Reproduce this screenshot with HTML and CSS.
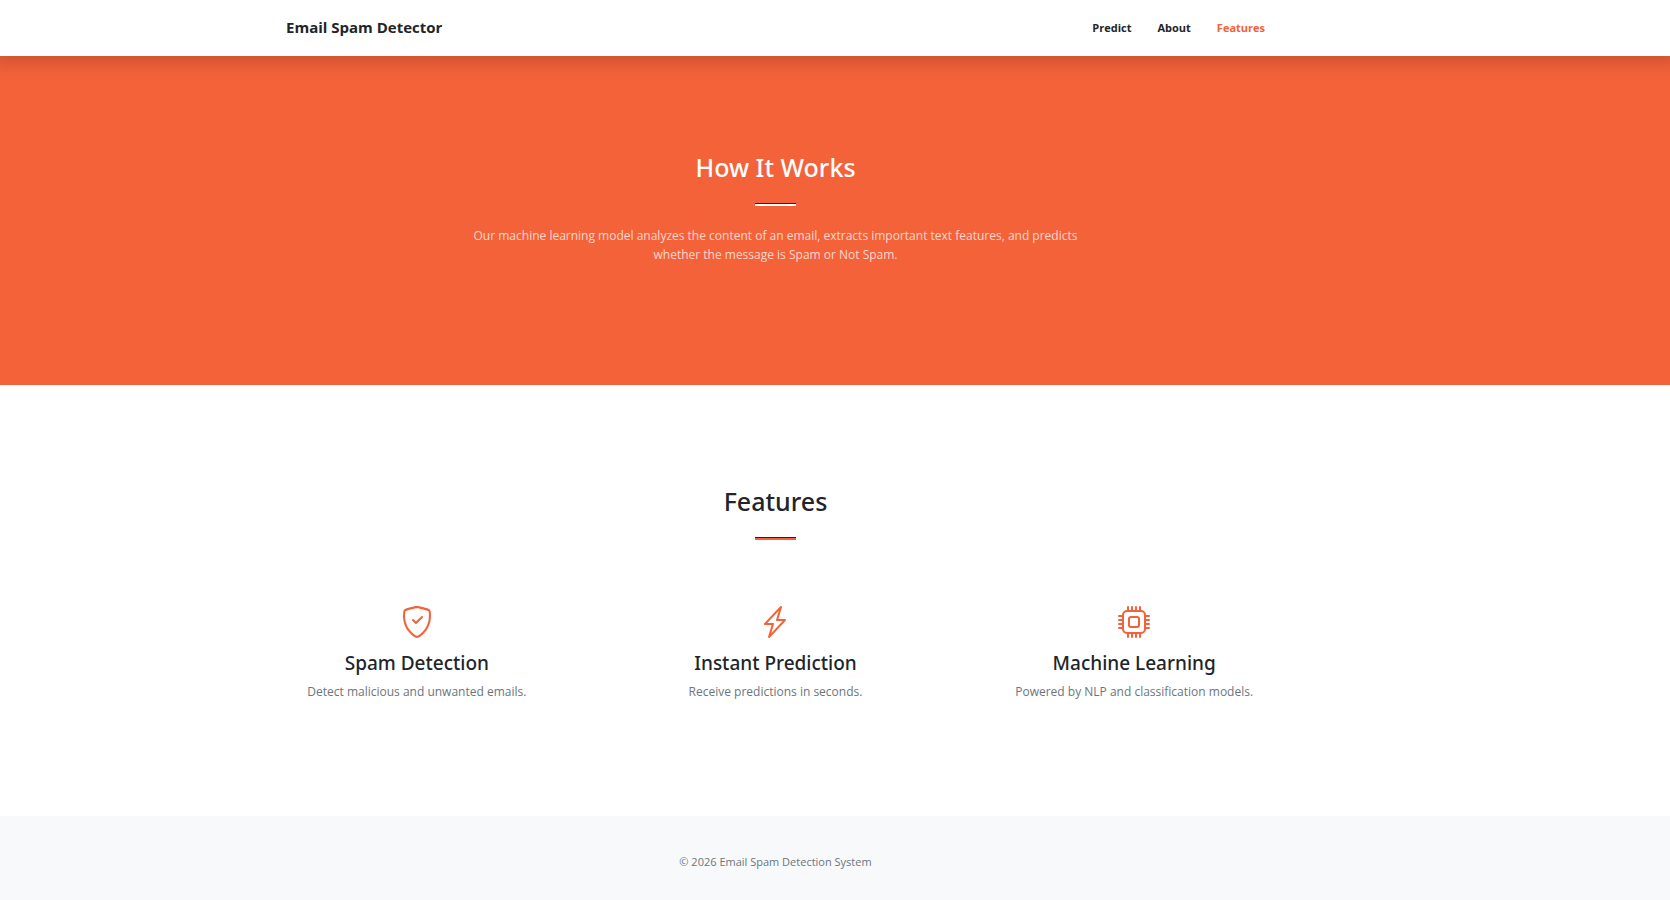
FILE: index.html
```html
<!DOCTYPE html>
<html lang="en">
<head>
  <meta charset="UTF-8" />
  <meta name="viewport" content="width=device-width, initial-scale=1.0"/>
  <title>Email Spam Detector</title>
  <link rel="stylesheet" href="styles.css">
</head>
<body>
  <!-- NAVBAR -->
  <nav class="navbar">
    <div class="container">
      <a class="brand" href="#about">Email Spam Detector</a>
      <div class="nav-links">
        <a href="#predict">Predict</a>
        <a href="#about">About</a>
        <a class="active" href="#features">Features</a>
      </div>
    </div>
  </nav>

  <!-- ABOUT -->
  <section class="about" id="about">
    <div class="container">
      <h2>How It Works</h2>
      <hr class="divider divider-light">
      <p>Our machine learning model analyzes the content of an email, extracts important text features, and predicts whether the message is Spam or Not Spam.</p>
    </div>
  </section>

  <!-- FEATURES -->
  <section class="features" id="features">
    <div class="container">
      <h2>Features</h2>
      <hr class="divider">
      <div class="feature-list">
        <div class="feature">
          <svg class="icon" viewBox="0 0 16 16" aria-hidden="true">
            <path d="M5.338 1.59a61 61 0 0 0-2.837.856.48.48 0 0 0-.328.39c-.554 4.157.726 7.19 2.253 9.188a10.7 10.7 0 0 0 2.287 2.233c.346.244.652.42.893.533q.18.085.293.118a1 1 0 0 0 .101.025 1 1 0 0 0 .1-.025q.114-.034.294-.118c.24-.113.547-.29.893-.533a10.7 10.7 0 0 0 2.287-2.233c1.527-1.997 2.807-5.031 2.253-9.188a.48.48 0 0 0-.328-.39c-.651-.213-1.75-.56-2.837-.855C9.552 1.29 8.531 1.067 8 1.067c-.53 0-1.552.223-2.662.524zM5.072.56C6.157.265 7.31 0 8 0s1.843.265 2.928.56c1.11.3 2.229.655 2.887.87a1.54 1.54 0 0 1 1.044 1.262c.596 4.477-.787 7.795-2.465 9.99a11.8 11.8 0 0 1-2.517 2.453 7 7 0 0 1-1.048.625c-.28.132-.581.24-.829.24s-.548-.108-.829-.24a7 7 0 0 1-1.048-.625 11.8 11.8 0 0 1-2.517-2.453C1.928 10.487.545 7.169 1.141 2.692A1.54 1.54 0 0 1 2.185 1.43 63 63 0 0 1 5.072.56"/>
            <path d="M10.854 5.146a.5.5 0 0 1 0 .708l-3 3a.5.5 0 0 1-.708 0l-1.5-1.5a.5.5 0 1 1 .708-.708L7.5 7.793l2.646-2.647a.5.5 0 0 1 .708 0"/>
          </svg>
          <h3>Spam Detection</h3>
          <p>Detect malicious and unwanted emails.</p>
        </div>
        <div class="feature">
          <svg class="icon" viewBox="0 0 16 16" aria-hidden="true">
            <path d="M11.251.068a.5.5 0 0 1 .227.58L9.677 6.5H13a.5.5 0 0 1 .364.843l-8 8.5a.5.5 0 0 1-.842-.49L6.323 9.5H3a.5.5 0 0 1-.364-.843l8-8.5a.5.5 0 0 1 .615-.09zM4.157 8.5H7a.5.5 0 0 1 .478.647L6.11 13.59l5.732-6.09H9a.5.5 0 0 1-.478-.647L9.89 2.41z"/>
          </svg>
          <h3>Instant Prediction</h3>
          <p>Receive predictions in seconds.</p>
        </div>
        <div class="feature">
          <svg class="icon" viewBox="0 0 16 16" aria-hidden="true">
            <path d="M5 0a.5.5 0 0 1 .5.5V2h1V.5a.5.5 0 0 1 1 0V2h1V.5a.5.5 0 0 1 1 0V2h1V.5a.5.5 0 0 1 1 0V2A2.5 2.5 0 0 1 14 4.5h1.5a.5.5 0 0 1 0 1H14v1h1.5a.5.5 0 0 1 0 1H14v1h1.5a.5.5 0 0 1 0 1H14v1h1.5a.5.5 0 0 1 0 1H14a2.5 2.5 0 0 1-2.5 2.5v1.5a.5.5 0 0 1-1 0V14h-1v1.5a.5.5 0 0 1-1 0V14h-1v1.5a.5.5 0 0 1-1 0V14h-1v1.5a.5.5 0 0 1-1 0V14A2.5 2.5 0 0 1 2 11.5H.5a.5.5 0 0 1 0-1H2v-1H.5a.5.5 0 0 1 0-1H2v-1H.5a.5.5 0 0 1 0-1H2v-1H.5a.5.5 0 0 1 0-1H2A2.5 2.5 0 0 1 4.5 2V.5A.5.5 0 0 1 5 0m-.5 3A1.5 1.5 0 0 0 3 4.5v7A1.5 1.5 0 0 0 4.5 13h7a1.5 1.5 0 0 0 1.5-1.5v-7A1.5 1.5 0 0 0 11.5 3zM5 6.5A1.5 1.5 0 0 1 6.5 5h3A1.5 1.5 0 0 1 11 6.5v3A1.5 1.5 0 0 1 9.5 11h-3A1.5 1.5 0 0 1 5 9.5zM6.5 6a.5.5 0 0 0-.5.5v3a.5.5 0 0 0 .5.5h3a.5.5 0 0 0 .5-.5v-3a.5.5 0 0 0-.5-.5z"/>
          </svg>
          <h3>Machine Learning</h3>
          <p>Powered by NLP and classification models.</p>
        </div>
      </div>
    </div>
  </section>

  <!-- FOOTER -->
  <footer class="footer">
    <div class="container">© 2026 Email Spam Detection System</div>
  </footer>
</body>
</html>
```
FILE: styles.css
```css
* {
  box-sizing: border-box;
}
body {
  margin: 0;
  font-family: "Open Sans", "Noto Sans", sans-serif;
  font-size: 12px;
  line-height: 19px;
  color: #212529;
  background: white;
}
h2, h3, p {
  margin: 0;
}
h2, h3 {
  font-family: "Noto Sans", "Open Sans", sans-serif;
  font-weight: 500;
}
a {
  color: inherit;
  text-decoration: none;
}
.navbar, .about, .features, .footer {
  padding-left: 24px;
  padding-right: 143px;
}
.container {
  max-width: 979px;
  margin: 0 auto;
  text-align: center;
}
.navbar {
  position: sticky;
  top: 0;
  z-index: 1;
  background: white;
  box-shadow: 0 0 16px 8px rgba(0,0,0,0.15);
}
.navbar .container {
  display: flex;
  justify-content: space-between;
  align-items: center;
  height: 56px;
  padding-bottom: 2px;
}
.brand {
  font-size: 15px;
  font-weight: 700;
}
.nav-links {
  display: flex;
  gap: 26px;
  font-size: 11px;
  font-weight: 700;
}
.nav-links .active {
  color: #f4623a;
}
h2 {
  font-size: 25px;
  line-height: 31px;
}
.divider {
  width: 41px;
  height: 3px;
  margin: 20px auto;
  border: none;
  border-top: 1px solid #212529;
  background: #f4623a;
}
.divider-light {
  background: white;
}
.about {
  padding-top: 96px;
  padding-bottom: 121px;
  background: #f4623a;
  color: white;
}
.about p {
  max-width: 640px;
  margin: 0 auto;
  color: rgba(255,255,255,0.75);
}
.features {
  padding-top: 101px;
  padding-bottom: 115px;
}
.feature-list {
  display: grid;
  grid-template-columns: repeat(3, 1fr);
  gap: 97px;
  padding-top: 46px;
}
.icon {
  display: block;
  width: 32px;
  height: 32px;
  margin: 0 auto 12px;
  fill: #f4623a;
}
h3 {
  margin-bottom: 6px;
  font-size: 19px;
  line-height: 26px;
}
.feature p {
  color: #6c757d;
}
.footer {
  padding-top: 37px;
  padding-bottom: 30px;
  background: #f8f9fb;
  font-size: 11px;
  line-height: 17px;
  color: #6c757d;
}
```
